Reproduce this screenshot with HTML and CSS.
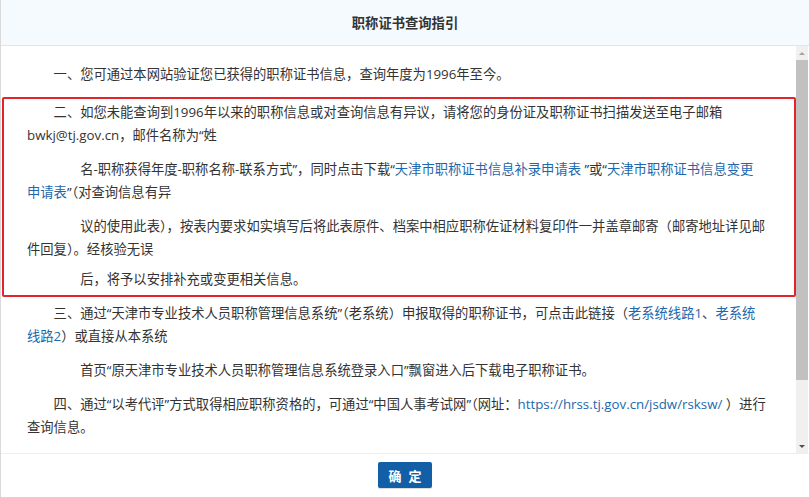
FILE: index.html
```html
<!DOCTYPE html>
<html lang="zh-CN">
<head>
<meta charset="utf-8">
<title>职称证书查询指引</title>
<link rel="stylesheet" href="styles.css">
</head>
<body>
<div class="dialog">
  <header class="dlg-head">职称证书查询指引</header>
  <div class="dlg-body">
    <div class="content">
      <p class="i2">一、您可通过本网站验证您已获得的职称证书信息，查询年度为1996年至今。</p>
      <p class="i2 box-first">二、如您未能查询到1996年以来的职称信息或对查询信息有异议，请将您的身份证及职称证书扫描发送至电子邮箱<br>bwkj@tj.gov.cn，邮件名称为“姓</p>
      <p class="i4">名-职称获得年度-职称名称-联系方式”，同时点击下载“<a href="#">天津市职称证书信息补录申请表</a> ”或“<a href="#">天津市职称证书信息变更<br>申请表</a>”（对查询信息有异</p>
      <p class="i4 pre-tight">议的使用此表），按表内要求如实填写后将此表原件、档案中相应职称佐证材料复印件一并盖章邮寄（邮寄地址详见邮<br>件回复）。经核验无误</p>
      <p class="i4 tight">后，将予以安排补充或变更相关信息。</p>
      <p class="i2">三、通过“天津市专业技术人员职称管理信息系统”（老系统）申报取得的职称证书，可点击此链接（<a href="#">老系统线路1</a>、<a href="#">老系统<br>线路2</a>）或直接从本系统</p>
      <p class="i4">首页“原天津市专业技术人员职称管理信息系统登录入口”飘窗进入后下载电子职称证书。</p>
      <p class="i2">四、通过“以考代评”方式取得相应职称资格的，可通过“中国人事考试网”（网址：<a href="#">https://hrss.tj.gov.cn/jsdw/rsksw/</a> ）进行<br>查询信息。</p>
    </div>
    <div class="scrollbar">
      <div class="sb-btn"><span class="tri-up"></span></div>
      <div class="sb-thumb"></div>
      <div class="sb-track"></div>
      <div class="sb-btn"><span class="tri-down"></span></div>
    </div>
    <div class="mark"></div>
  </div>
  <footer class="dlg-foot"><button class="btn" type="button">确 定</button></footer>
</div>
</body>
</html>
```
FILE: styles.css
```css
html, body {
  margin: 0;
  padding: 0;
  background: #fff;
}
body {
  font-family: "Open Sans", "Noto Sans CJK SC", sans-serif;
  color: #333;
}
.dialog {
  width: 810px;
  height: 497px;
  box-sizing: border-box;
  border-left: 1px solid #d9d9d9;
  border-right: 1px solid #d9d9d9;
  display: flex;
  flex-direction: column;
  overflow: hidden;
}
.dlg-head {
  height: 45px;
  flex: none;
  background: #f4fafd;
  border-bottom: 1px solid #e3e6e8;
  display: flex;
  align-items: center;
  justify-content: center;
  font-family: "Noto Sans CJK SC", sans-serif;
  font-size: 13.3px;
  font-weight: bold;
  color: #333;
}
.dlg-body {
  position: relative;
  height: 407px;
  flex: none;
  display: flex;
}
.content {
  flex: 1;
  overflow: hidden;
  padding: 6px 10px 0 26px;
  font-size: 13.3px;
}
.content p {
  margin: 11px 0;
  line-height: 23px;
  white-space: nowrap;
}
.content p.box-first { margin-top: 15px; }
.content p.pre-tight { margin-bottom: 7px; }
.content p.tight { margin-top: 7px; }
.content .i2 { text-indent: 2em; }
.content .i4 { text-indent: 4em; }
.content a {
  color: #1d68ad;
  text-decoration: none;
}
.scrollbar {
  width: 12px;
  margin-right: 1px;
  flex: none;
  display: flex;
  flex-direction: column;
  background: #f0f0f0;
}
.sb-btn {
  height: 14px;
  flex: none;
  display: flex;
  align-items: center;
  justify-content: center;
}
.tri-up, .tri-down {
  width: 0;
  height: 0;
  border-left: 3px solid transparent;
  border-right: 3px solid transparent;
}
.tri-up { border-bottom: 3px solid #a3a3a3; }
.tri-down { border-top: 3px solid #505050; }
.sb-thumb {
  height: 320px;
  flex: none;
  background: #c1c1c1;
}
.sb-track { flex: 1; }
.mark {
  position: absolute;
  left: 1px;
  top: 51px;
  width: 794px;
  height: 200px;
  box-sizing: border-box;
  border: 2px solid #e3242b;
  border-radius: 2px;
  pointer-events: none;
}
.dlg-foot {
  flex: 1;
  border-top: 1px solid #eeeeee;
  display: flex;
  justify-content: center;
  align-items: flex-start;
  padding-top: 8px;
}
.btn {
  width: 54px;
  height: 26px;
  border: none;
  border-radius: 2px;
  background: #135fa7;
  color: #fff;
  font-family: "Noto Sans CJK SC", sans-serif;
  font-size: 13px;
  font-weight: bold;
  letter-spacing: 2px;
  padding: 0 0 0 2px;
  box-shadow: 0 1px 1px rgba(0,0,0,0.15);
}
```
